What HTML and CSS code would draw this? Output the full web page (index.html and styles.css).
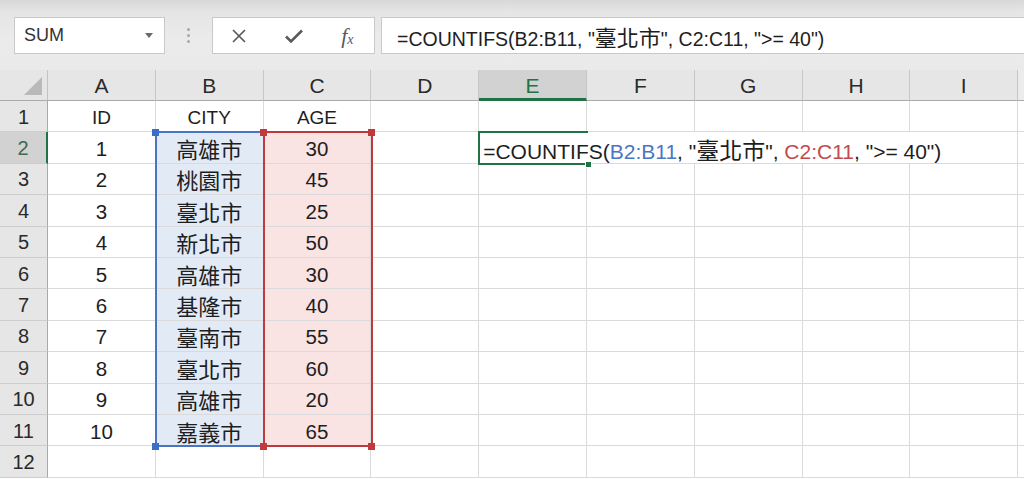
FILE: index.html
```html
<!DOCTYPE html>
<html lang="zh-Hant">
<head>
<meta charset="utf-8">
<title>COUNTIFS</title>
<link rel="stylesheet" href="styles.css">
</head>
<body>
<div class="toolbar">
  <div class="namebox"><span class="name">SUM</span><span class="caret"></span></div>
  <div class="grip"><i></i><i></i><i></i></div>
  <div class="fxbtns">
    <svg class="ico" width="16" height="16" viewBox="0 0 16 16"><path d="M2 2 L14 14 M14 2 L2 14" stroke="#5a5a5a" stroke-width="1.7" fill="none"/></svg>
    <svg class="ico" width="20" height="16" viewBox="0 0 20 16"><path d="M2 8.5 L7 13.5 L18 2.5" stroke="#5a5a5a" stroke-width="2.6" fill="none"/></svg>
    <span class="fx">f<sub>x</sub></span>
  </div>
  <div class="formula"><span>=COUNTIFS(B2:B11, "<span class="cj">臺北市</span>", C2:C11, "&gt;= 40")</span></div>
</div>

<div class="sheet">
  <div class="corner"><span class="tri"></span></div>
  <div class="ch">A</div><div class="ch">B</div><div class="ch">C</div><div class="ch">D</div>
  <div class="ch sel">E</div><div class="ch">F</div><div class="ch">G</div><div class="ch">H</div><div class="ch">I</div><div class="ch fill"></div>

  <div class="rh">1</div><div class="c">ID</div><div class="c">CITY</div><div class="c">AGE</div><div class="c"></div><div class="c"></div><div class="c"></div><div class="c"></div><div class="c"></div><div class="c"></div><div class="f"></div>

  <div class="rh sel">2</div><div class="c n">1</div><div class="c rb">高雄市</div><div class="c n rc">30</div><div class="c"></div>
  <div class="c over"><span><span class="k">=COUNTIFS(</span><span class="b">B2:B11</span>, "<span class="cj">臺北市</span>", <span class="r">C2:C11</span>, "&gt;= 40")</span></div><div class="f"></div>

  <div class="rh">3</div><div class="c n">2</div><div class="c rb">桃園市</div><div class="c n rc">45</div><div class="c"></div><div class="c"></div><div class="c"></div><div class="c"></div><div class="c"></div><div class="c"></div><div class="f"></div>
  <div class="rh">4</div><div class="c n">3</div><div class="c rb">臺北市</div><div class="c n rc">25</div><div class="c"></div><div class="c"></div><div class="c"></div><div class="c"></div><div class="c"></div><div class="c"></div><div class="f"></div>
  <div class="rh">5</div><div class="c n">4</div><div class="c rb">新北市</div><div class="c n rc">50</div><div class="c"></div><div class="c"></div><div class="c"></div><div class="c"></div><div class="c"></div><div class="c"></div><div class="f"></div>
  <div class="rh">6</div><div class="c n">5</div><div class="c rb">高雄市</div><div class="c n rc">30</div><div class="c"></div><div class="c"></div><div class="c"></div><div class="c"></div><div class="c"></div><div class="c"></div><div class="f"></div>
  <div class="rh">7</div><div class="c n">6</div><div class="c rb">基隆市</div><div class="c n rc">40</div><div class="c"></div><div class="c"></div><div class="c"></div><div class="c"></div><div class="c"></div><div class="c"></div><div class="f"></div>
  <div class="rh">8</div><div class="c n">7</div><div class="c rb">臺南市</div><div class="c n rc">55</div><div class="c"></div><div class="c"></div><div class="c"></div><div class="c"></div><div class="c"></div><div class="c"></div><div class="f"></div>
  <div class="rh">9</div><div class="c n">8</div><div class="c rb">臺北市</div><div class="c n rc">60</div><div class="c"></div><div class="c"></div><div class="c"></div><div class="c"></div><div class="c"></div><div class="c"></div><div class="f"></div>
  <div class="rh">10</div><div class="c n">9</div><div class="c rb">高雄市</div><div class="c n rc">20</div><div class="c"></div><div class="c"></div><div class="c"></div><div class="c"></div><div class="c"></div><div class="c"></div><div class="f"></div>
  <div class="rh">11</div><div class="c n">10</div><div class="c rb">嘉義市</div><div class="c n rc">65</div><div class="c"></div><div class="c"></div><div class="c"></div><div class="c"></div><div class="c"></div><div class="c"></div><div class="f"></div>
  <div class="rh">12</div><div class="c"></div><div class="c"></div><div class="c"></div><div class="c"></div><div class="c"></div><div class="c"></div><div class="c"></div><div class="c"></div><div class="c"></div><div class="f"></div>

  <div class="range blue"><i class="h tl"></i><i class="h bl"></i></div>
  <div class="range red"><i class="h tl"></i><i class="h tr"></i><i class="h bl"></i><i class="h br"></i></div>
  <div class="active"><i class="handle"></i></div>
</div>
</body>
</html>
```

FILE: styles.css
```css
* { box-sizing: border-box; }
html, body { margin: 0; padding: 0; }
body {
  width: 1024px;
  height: 479px;
  overflow: hidden;
  background: #ffffff;
  font-family: "Liberation Sans", "Noto Sans CJK TC", sans-serif;
  color: #1e1e1e;
}

/* ---------- formula toolbar ---------- */
.toolbar {
  height: 70px;
  display: flex;
  align-items: flex-start;
  padding: 17px 0 0 14px;
  background: linear-gradient(#d8d8d8 0px, #e5e5e5 12px, #ebebeb 40px, #eaeaea 70px);
}
.namebox {
  width: 151px;
  height: 37px;
  background: #fff;
  border: 1px solid #c9c9c9;
  display: flex;
  align-items: center;
  justify-content: space-between;
  padding: 0 11px 0 9px;
}
.name { font-size: 18px; color: #333; }
.caret {
  width: 0; height: 0;
  border-left: 4.5px solid transparent;
  border-right: 4.5px solid transparent;
  border-top: 5px solid #6a6a6a;
}
.grip {
  width: 47px;
  height: 37px;
  display: flex;
  flex-direction: column;
  align-items: center;
  justify-content: center;
  gap: 3px;
}
.grip i {
  display: block;
  width: 3px; height: 3px;
  border-radius: 50%;
  background: #a8a8a8;
}
.fxbtns {
  width: 163px;
  height: 37px;
  background: #fff;
  border: 1px solid #c9c9c9;
  display: flex;
  align-items: center;
  justify-content: space-around;
  padding: 0 2px 0 0;
}
.ico { display: block; }
.fx {
  font-family: "Liberation Serif", "DejaVu Serif", serif;
  font-style: italic;
  font-size: 22px;
  color: #5a5a5a;
  line-height: 1;
}
.fx sub { font-size: 14px; vertical-align: -1px; }
.formula {
  flex: 1;
  height: 37px;
  margin-left: 6px;
  margin-right: -4px;
  background: #fff;
  border: 1px solid #c9c9c9;
  display: flex;
  align-items: center;
  padding-left: 15px;
  font-size: 19.5px;
  white-space: nowrap;
  color: #1e1e1e;
}
.formula .cj { font-size: 22px; }

/* ---------- sheet grid ---------- */
.sheet {
  position: relative;
  display: grid;
  grid-template-columns: 48px repeat(9, 107.8px) 1fr;
  grid-template-rows: 31px repeat(12, 31.4px);
}
.corner {
  background: #e6e6e6;
  border-right: 1px solid #c3c3c3;
  border-bottom: 1px solid #a9a9a9;
  position: relative;
}
.tri {
  position: absolute;
  right: 5px;
  bottom: 5px;
  width: 0; height: 0;
  border-left: 18px solid transparent;
  border-bottom: 18px solid #b9b9b9;
}
.ch {
  background: #e6e6e6;
  border-right: 1px solid #c6c6c6;
  border-bottom: 1px solid #a9a9a9;
  display: flex;
  align-items: center;
  justify-content: center;
  font-size: 21px;
  color: #2a2a2a;
  padding-top: 2px;
}
.ch.sel {
  background: #d2d2d2;
  color: #217346;
  border-bottom: 3px solid #217346;
  padding-top: 4px;
}
.ch.fill { border-right: none; background: #ececec; }
.rh {
  background: #e6e6e6;
  border-right: 1px solid #a9a9a9;
  border-bottom: 1px solid #cdcdcd;
  display: flex;
  align-items: center;
  justify-content: center;
  font-size: 20px;
  color: #2a2a2a;
  padding-top: 2px;
}
.rh.sel {
  background: #d2d2d2;
  color: #3d6b50;
  border-right: 2px solid #217346;
}
.c {
  border-right: 1px solid #dadada;
  border-bottom: 1px solid #dadada;
  display: flex;
  align-items: center;
  justify-content: center;
  font-size: 19px;
  color: #1e1e1e;
  padding-top: 3px;
  white-space: nowrap;
}
.c.n { font-size: 20.5px; }
.c.rb { background: #e2eaf6; font-size: 22px; padding-top: 1px; }
.c.rc { background: #f9e3e3; }
.c.over {
  grid-column: span 5;
  justify-content: flex-start;
  padding-left: 4px;
  font-size: 21px;
}
.over .cj { font-size: 23px; }
.over .b { color: #4a75c2; }
.over .r { color: #c24a4c; }
.f { border-bottom: 1px solid #dadada; background: #fff; }

/* ---------- overlays ---------- */
.range {
  position: absolute;
  top: 61px;
  height: 316.4px;
  border: 2px solid;
}
.range.blue { left: 154.8px; width: 110px; border-color: #4a75c2; }
.range.red  { left: 262.6px; width: 110px; border-color: #c0393b; }
.h {
  position: absolute;
  width: 7px; height: 7px;
}
.blue .h { background: #3b6fc4; }
.red .h { background: #c0393b; }
.h.tl { top: -4.5px; left: -4.5px; }
.h.tr { top: -4.5px; right: -4.5px; }
.h.bl { bottom: -4.5px; left: -4.5px; }
.h.br { bottom: -4.5px; right: -4.5px; }
.active {
  position: absolute;
  left: 478.2px;
  top: 61px;
  width: 110px;
  height: 34px;
  border: 2px solid #217346;
  border-right: none;
}
.handle {
  position: absolute;
  right: -4px;
  bottom: -5px;
  width: 7px;
  height: 7px;
  background: #217346;
  border: 1px solid #fff;
}
```
